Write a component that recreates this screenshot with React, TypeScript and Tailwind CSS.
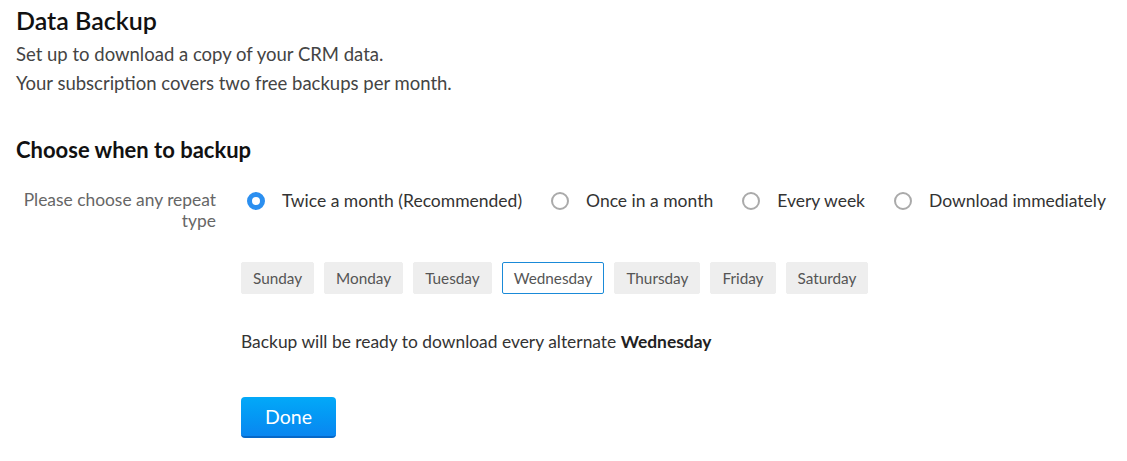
import { useState } from 'react';

const repeatTypes = ['Twice a month (Recommended)', 'Once in a month', 'Every week', 'Download immediately'];
const days = ['Sunday', 'Monday', 'Tuesday', 'Wednesday', 'Thursday', 'Friday', 'Saturday'];

export default function App() {
  const [repeat, setRepeat] = useState(repeatTypes[0]);
  const [day, setDay] = useState('Wednesday');

  return (
    <div className="min-h-screen bg-white px-4 pt-[3px] text-[#333] font-['Lato','Noto_Sans',sans-serif]">
      <h1 className="text-[25px] leading-[34px] font-semibold text-[#111]">Data Backup</h1>
      <p className="mt-[3px] text-[18.5px] leading-[29px] text-[#444]">
        Set up to download a copy of your CRM data.
        <br />
        Your subscription covers two free backups per month.
      </p>

      <h2 className="mt-[37px] text-[22px] leading-[30px] font-bold text-[#111]">Choose when to backup</h2>

      <div className="mt-[24px] flex">
        <div className="w-[200px] text-right text-[17.4px] leading-[21px] text-[#666]">
          Please choose any repeat type
        </div>
        <div className="ml-[25px] flex flex-col">
          <div className="flex items-center h-[24px] pl-[6px] gap-[29px]">
            {repeatTypes.map(r => (
              <label key={r} className="flex items-center cursor-pointer text-[17.5px] text-[#333]" onClick={() => setRepeat(r)}>
                {repeat === r ? (
                  <span className="w-[18px] h-[18px] rounded-full border-[5px] border-[#2b8ff0] bg-white" />
                ) : (
                  <span className="w-[18px] h-[18px] rounded-full border-2 border-[#aaa] bg-white" />
                )}
                <span className="ml-[17px]">{r}</span>
              </label>
            ))}
          </div>

          <div className="mt-[49px] flex gap-[10px]">
            {days.map(d => (
              <button
                key={d}
                onClick={() => setDay(d)}
                className={
                  day === d
                    ? 'h-[32px] px-[11px] rounded-[2px] border border-[#1a8ad8] bg-white text-[15.3px] text-[#555]'
                    : 'h-[32px] px-[11px] rounded-[2px] border border-[#eee] bg-[#eee] text-[15.3px] text-[#555]'
                }
              >
                {d}
              </button>
            ))}
          </div>

          <p className="mt-[36px] text-[17.4px] leading-[24px] text-[#333]">
            Backup will be ready to download every alternate <span className="font-bold text-[#222]">{day}</span>
          </p>

          <div className="mt-[43px]">
            <button className="w-[95px] h-[41px] rounded-[4px] bg-gradient-to-b from-[#03a9f8] to-[#0a86f0] border-b-2 border-[#0668c8] text-white text-[19.5px]">
              Done
            </button>
          </div>
        </div>
      </div>
    </div>
  );
}
